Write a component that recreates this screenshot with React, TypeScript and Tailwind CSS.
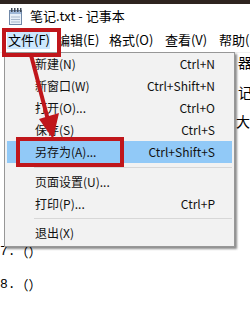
import React from "react";

const ui = { fontFamily: '"Noto Sans CJK SC", "Noto Sans", sans-serif' };
const mono = { fontFamily: '"Liberation Mono", "Noto Sans CJK SC", monospace' };

function NotepadIcon() {
  return (
    <svg width="15" height="18" viewBox="0 0 15 18">
      <rect x="1.5" y="3.5" width="12" height="14" fill="#e8f0f8" stroke="#7088a8" />
      <rect x="2" y="4" width="11" height="3" fill="#9fb8d8" />
      <line x1="3" y1="10" x2="12" y2="10" stroke="#a8b8cc" />
      <line x1="3" y1="12.5" x2="12" y2="12.5" stroke="#a8b8cc" />
      <line x1="3" y1="15" x2="12" y2="15" stroke="#a8b8cc" />
      <rect x="3" y="1" width="1.5" height="4" fill="#404a58" />
      <rect x="6" y="1" width="1.5" height="4" fill="#404a58" />
      <rect x="9" y="1" width="1.5" height="4" fill="#404a58" />
      <rect x="12" y="1" width="1.5" height="4" fill="#404a58" />
    </svg>
  );
}

function MenuRow({ label, shortcut, active }: { label: string; shortcut?: string; active?: boolean }) {
  return (
    <div
      className={
        "mx-[2px] flex h-[22px] items-center justify-between pl-[28px] pr-[17px] text-[12px] text-[#111] " +
        (active ? "bg-[#91c9f7]" : "")
      }
    >
      <span className="whitespace-nowrap">{label}</span>
      {shortcut && <span className="whitespace-nowrap">{shortcut}</span>}
    </div>
  );
}

function Separator({ h }: { h: string }) {
  return (
    <div className={"flex items-center pl-[29px] pr-[2px] " + h}>
      <div className="h-px w-full bg-[#d7d7d7]" />
    </div>
  );
}

export default function App() {
  return (
    <div className="relative h-[319px] w-[250px] overflow-hidden bg-white" style={ui}>
      <div className="h-[4px] bg-[#2e2420]" />
      <div className="flex h-[24px] items-center gap-[7px] pl-[8px]">
        <NotepadIcon />
        <span className="whitespace-nowrap text-[13px] text-black">笔记.txt - 记事本</span>
      </div>
      <div className="flex h-[25px] items-center border-b border-[#efefef] text-[13px] text-black">
        <span className="ml-[7px] flex h-[18px] w-[46px] items-center whitespace-nowrap bg-[#cce8ff] pl-[1px]">文件(F)</span>
        <span className="ml-[7px] w-[38px] whitespace-nowrap">编辑(E)</span>
        <span className="ml-[14px] w-[42px] whitespace-nowrap">格式(O)</span>
        <span className="ml-[14px] w-[40px] whitespace-nowrap">查看(V)</span>
        <span className="ml-[14px] whitespace-nowrap">帮助(H)</span>
      </div>

      <div className="flex flex-col text-[14px] text-black">
        <div className="flex h-[19px] items-center pl-[238px]">器</div>
        <div className="mt-[11px] flex h-[19px] items-center pl-[238px]">记</div>
        <div className="mt-[10px] flex h-[19px] items-center pl-[236px]">大</div>
        <div className="mt-[111px] flex h-[19px] items-center">
          <span className="text-[13px]" style={mono}>7.</span>
          <span className="text-[13px]">（）</span>
        </div>
        <div className="mt-[14px] flex h-[19px] items-center">
          <span className="text-[13px]" style={mono}>8.</span>
          <span className="text-[13px]">（）</span>
        </div>
      </div>

      <div className="absolute left-[4px] top-[52px] flex h-[195px] w-[231px] flex-col border border-[#979797] bg-[#f2f2f2] pb-[2px] shadow-[2px_2px_2px_rgba(0,0,0,0.45)]">
        <MenuRow label="新建(N)" shortcut="Ctrl+N" />
        <MenuRow label="新窗口(W)" shortcut="Ctrl+Shift+N" />
        <MenuRow label="打开(O)..." shortcut="Ctrl+O" />
        <MenuRow label="保存(S)" shortcut="Ctrl+S" />
        <MenuRow label="另存为(A)..." shortcut="Ctrl+Shift+S" active />
        <Separator h="h-[8px]" />
        <MenuRow label="页面设置(U)..." />
        <MenuRow label="打印(P)..." shortcut="Ctrl+P" />
        <Separator h="h-[7px]" />
        <MenuRow label="退出(X)" />
      </div>

      {/* annotations */}
      <div className="absolute left-[2px] top-[28px] h-[29px] w-[59px] border-[4px] border-[#c0161b]" />
      <div className="absolute left-[16px] top-[137px] h-[30px] w-[108px] border-[4px] border-[#c0161b]" />
      <svg className="pointer-events-none absolute left-0 top-0" width="250" height="319">
        <line x1="31" y1="55" x2="48" y2="120" stroke="#c0161b" strokeWidth="4" />
        <polygon points="39,119 59,113 53,139" fill="#c0161b" />
      </svg>
    </div>
  );
}
